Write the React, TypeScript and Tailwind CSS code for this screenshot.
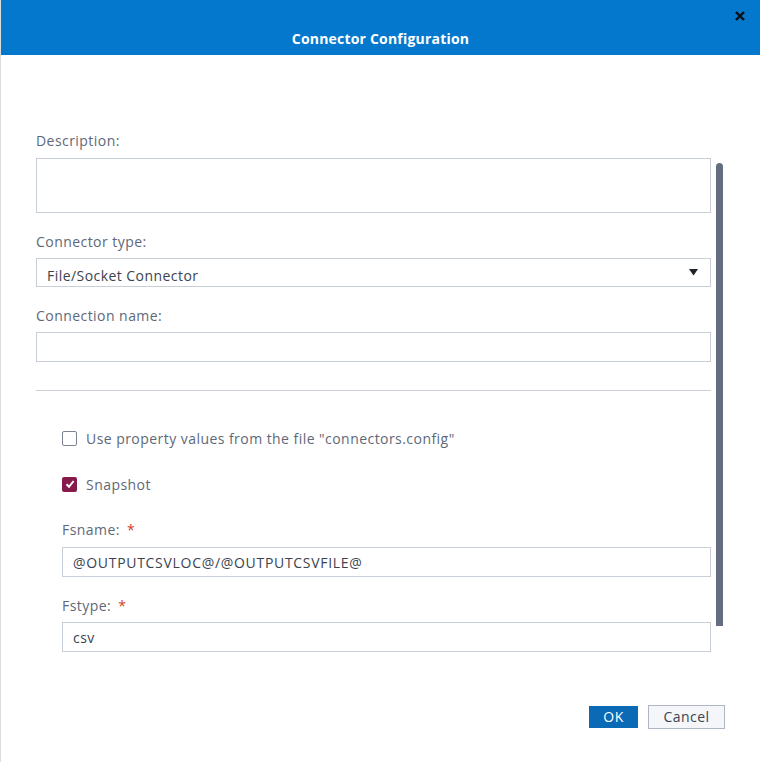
import React from "react";

const Label: React.FC<{ text: string; required?: boolean }> = ({ text, required }) => (
    <div className="h-[20px] text-[14px] leading-[20px] text-[#5e6878] tracking-[0.45px]">
        {text}
        {required && <span className="ml-[7px] text-[#d43c25]">*</span>}
    </div>
);

const CheckRow: React.FC<{ label: string; checked?: boolean; className?: string }> = ({ label, checked, className }) => (
    <label className={`flex items-center h-[20px] ${className ?? ""}`}>
        <span className={`w-[15px] h-[15px] rounded-[2px] flex items-center justify-center ${checked ? "bg-[#861a4d]" : "border border-[#7c8494] bg-white"}`}>
            {checked && (
                <svg width="10" height="10" viewBox="0 0 10 10">
                    <path d="M1.5 5.2 L4 7.8 L8.6 2" stroke="white" strokeWidth="2" fill="none" />
                </svg>
            )}
        </span>
        <span className="ml-[9px] text-[14px] text-[#5e6878] tracking-[0.45px]">{label}</span>
    </label>
);

export default function App() {
    return (
        <div className="w-[760px] h-[762px] bg-white border-l border-[#dcdcdc] flex flex-col" style={{ fontFamily: '"Open Sans", sans-serif' }}>
            {/* Header */}
            <div className="relative h-[55px] bg-[#0478cd] shrink-0">
                <div className="pt-[29px] text-center text-[14px] leading-[20px] font-bold text-white tracking-[0.2px]">Connector Configuration</div>
                <button aria-label="Close" className="absolute right-[15px] top-[11px] w-[10px] h-[10px]">
                    <svg width="10" height="10" viewBox="0 0 10 10">
                        <path d="M1 1 L9 9 M9 1 L1 9" stroke="#111" strokeWidth="2.4" />
                    </svg>
                </button>
            </div>

            {/* Body */}
            <div className="flex flex-1 items-start">
                <div className="ml-[35px] w-[675px] pt-[76px]">
                    <Label text="Description:" />
                    <textarea className="mt-[7px] block w-full h-[55px] border border-[#c9cfd7] resize-none outline-none" />

                    <div className="mt-[19px]"><Label text="Connector type:" /></div>
                    <div className="mt-[6px] h-[29px] border border-[#c9cfd7] flex items-center justify-between pl-[10px] pr-[12px]">
                        <span className="pt-[5px] text-[14px] text-[#3b4350] tracking-[0.45px]">File/Socket Connector</span>
                        <svg width="9" height="7" viewBox="0 0 9 7">
                            <path d="M0 0 H9 L4.5 6.5 Z" fill="#1f232b" />
                        </svg>
                    </div>

                    <div className="mt-[19px]"><Label text="Connection name:" /></div>
                    <div className="mt-[6px] h-[30px] border border-[#c9cfd7]" />

                    <div className="mt-[28px] h-px bg-[#ccd1d9]" />

                    <div className="pl-[26px]">
                        <CheckRow label={'Use property values from the file "connectors.config"'} className="mt-[37px]" />
                        <CheckRow label="Snapshot" checked className="mt-[26px]" />

                        <div className="mt-[26px]"><Label text="Fsname:" required /></div>
                        <div className="mt-[7px] h-[30px] border border-[#c9cfd7] flex items-center pl-[10px] text-[14px] text-[#3b4350] tracking-[0.7px]">@OUTPUTCSVLOC@/@OUTPUTCSVFILE@</div>

                        <div className="mt-[19px]"><Label text="Fstype:" required /></div>
                        <div className="mt-[6px] h-[30px] border border-[#c9cfd7] flex items-center pl-[10px] text-[14px] text-[#3b4350] tracking-[0.45px]">csv</div>
                    </div>
                </div>
                <div className="ml-[5px] mt-[108px] w-[7px] h-[463px] rounded-t-full rounded-b-[3px] bg-[#646e80]" />
            </div>

            {/* Footer */}
            <div className="flex justify-end gap-[10px] pr-[35px] pb-[33px]">
                <button className="mt-[1px] w-[49px] h-[22px] bg-[#0a6ab6] text-white text-[14px] leading-[22px] tracking-[0.45px]">OK</button>
                <button className="w-[77px] h-[24px] bg-[#f4f6f9] border border-[#aeb6c6] text-[#3b4350] text-[14px] leading-[20px] tracking-[0.45px]">Cancel</button>
            </div>
        </div>
    );
}
